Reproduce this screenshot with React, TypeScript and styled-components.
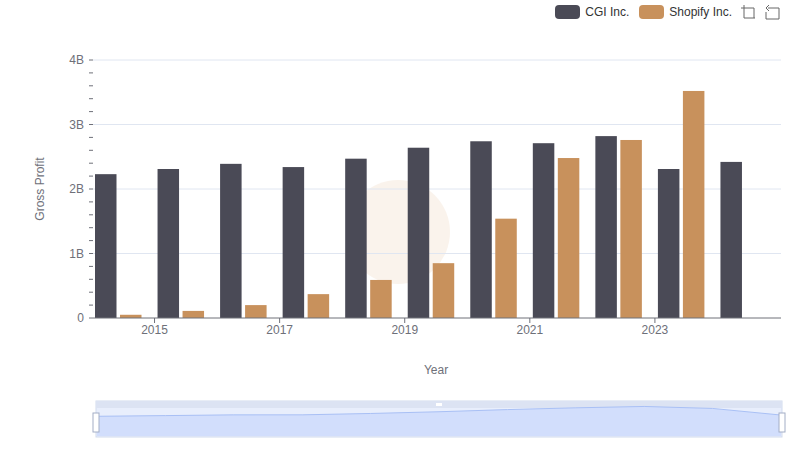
import styled, { createGlobalStyle } from "styled-components";

const Global = createGlobalStyle`
  body { margin: 0; background: #fff; font-family: "Liberation Sans", Arial, sans-serif; }
`;

const Page = styled.div`
  width: 800px;
  height: 461px;
  position: relative;
  overflow: hidden;
`;

const Legend = styled.div`
  position: absolute;
  top: 4px;
  right: 20px;
  display: flex;
  align-items: center;
  gap: 10px;
  font-size: 12px;
  color: #333;
`;

const LegendItem = styled.div`
  display: flex;
  align-items: center;
  gap: 5px;
`;

const Swatch = styled.span<{ $color: string }>`
  width: 25px;
  height: 14px;
  border-radius: 4px;
  background: ${(p) => p.$color};
`;

const Tools = styled.div`
  display: flex;
  gap: 8px;
  margin-left: -2px;
`;

const Chart = styled.svg`
  display: block;
`;

const CGI = [2.23, 2.31, 2.39, 2.34, 2.47, 2.64, 2.74, 2.71, 2.82, 2.31, 2.42];
const SHOP = [0.05, 0.11, 0.2, 0.37, 0.59, 0.85, 1.54, 2.48, 2.76, 3.52, 0];

const X0 = 93;
const X1 = 781;
const Y0 = 318;
const PER_B = 64.5;
const step = (X1 - X0) / 11;
const axisText = "#6e7079";

export default function App() {
  const overview = CGI.map((v, i) => {
    const x = 97 + (i * (781 - 97)) / 10;
    const y = 432 - (v + SHOP[i] * 0.3) * 7;
    return [x, y];
  });
  const line = overview.map(([x, y]) => `${x},${y}`).join(" ");
  return (
    <Page>
      <Global />
      <Legend>
        <LegendItem>
          <Swatch $color="#4a4a56" />
          CGI Inc.
        </LegendItem>
        <LegendItem>
          <Swatch $color="#c8915c" />
          Shopify Inc.
        </LegendItem>
        <Tools>
          <svg width="16" height="16" viewBox="0 0 16 16" fill="none" stroke="#666" strokeWidth="1">
            <path d="M4 1v13h11M1 4h13v10" />
          </svg>
          <svg width="16" height="16" viewBox="0 0 16 16" fill="none" stroke="#666" strokeWidth="1">
            <path d="M4 4h11v11H2V8M5 1L2 4l3 3" />
          </svg>
        </Tools>
      </Legend>
      <Chart width="800" height="461">
        <circle cx="398" cy="232" r="52" fill="#f6ebdf" opacity="0.6" />
        {[1, 2, 3, 4].map((b) => (
          <line key={b} x1={X0} x2={X1} y1={Y0 - b * PER_B} y2={Y0 - b * PER_B} stroke="#e0e6f1" />
        ))}
        {Array.from({ length: 21 }, (_, i) => (
          <line key={i} x1={89} x2={93} y1={Y0 - i * PER_B / 5} y2={Y0 - i * PER_B / 5} stroke={axisText} />
        ))}
        {["0", "1B", "2B", "3B", "4B"].map((t, i) => (
          <text key={t} x={84} y={Y0 - i * PER_B + 4} textAnchor="end" fontSize="12" fill={axisText}>
            {t}
          </text>
        ))}
        <text transform="translate(44,189) rotate(-90)" textAnchor="middle" fontSize="12" fill={axisText}>
          Gross Profit
        </text>
        {CGI.map((v, i) => {
          const x = X0 + i * step;
          return (
            <g key={i}>
              <rect x={x + 2} y={Y0 - v * PER_B} width={21.5} height={v * PER_B} fill="#4a4a56" />
              {SHOP[i] > 0 && (
                <rect x={x + 27} y={Y0 - SHOP[i] * PER_B} width={21.5} height={SHOP[i] * PER_B} fill="#c8915c" />
              )}
            </g>
          );
        })}
        <line x1={X0} x2={X1} y1={Y0} y2={Y0} stroke={axisText} />
        {[2015, 2017, 2019, 2021, 2023].map((yr) => {
          const x = X0 + (yr - 2014) * step - 1;
          return (
            <g key={yr}>
              <line x1={x} x2={x} y1={Y0} y2={Y0 + 5} stroke={axisText} />
              <text x={x} y={Y0 + 16} textAnchor="middle" fontSize="12" fill={axisText}>
                {yr}
              </text>
            </g>
          );
        })}
        <text x={436} y={374} textAnchor="middle" fontSize="12" fill={axisText}>
          Year
        </text>
        <rect x={96} y={401} width={686} height={36} fill="#e8eefc" stroke="#d2dbee" />
        <rect x={96} y={401} width={686} height={7} fill="#dce3f3" />
        <polygon points={`97,436 ${line} 781,436`} fill="#d2defc" />
        <polyline points={line} fill="none" stroke="#a9c0f5" />
        <rect x={436} y={403} width={6} height={3} fill="#fff" />
        <rect x={93} y={413} width={6} height={19} fill="#fff" stroke="#a3aec6" />
        <rect x={779} y={413} width={6} height={19} fill="#fff" stroke="#a3aec6" />
      </Chart>
    </Page>
  );
}
